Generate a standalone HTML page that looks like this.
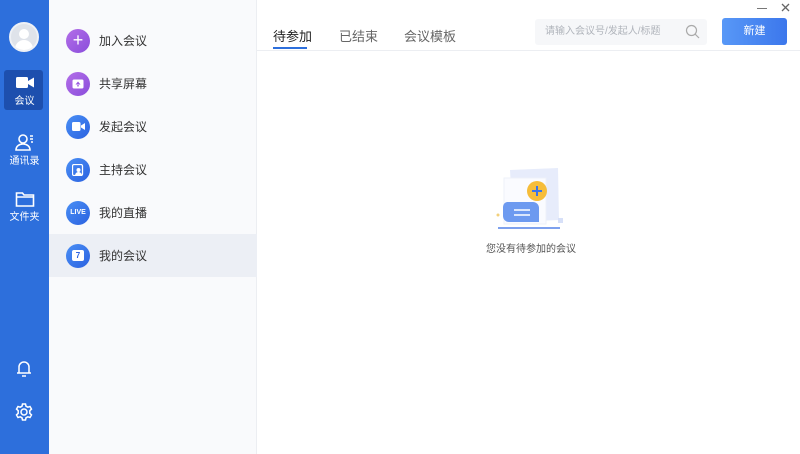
<!DOCTYPE html>
<html><head><meta charset="utf-8"><style>
*{margin:0;padding:0;box-sizing:border-box}
body{width:800px;height:454px;overflow:hidden;background:#fff;font-family:"Liberation Sans","Noto Sans CJK SC",sans-serif;position:relative}
.side{position:absolute;left:0;top:0;width:49px;height:454px;background:#2d6fdc}
.mid{position:absolute;left:49px;top:0;width:208px;height:454px;background:#f9fafc;border-right:1px solid #eceef2}
.item{position:absolute;left:0;width:208px;height:43px;display:flex;align-items:center}
.item .ic{width:24px;height:24px;border-radius:50%;margin-left:17px;margin-right:9px;display:flex;align-items:center;justify-content:center;color:#fff;font-size:8px;font-weight:bold}
.item span{font-size:12px;color:#333}
.pur{background:linear-gradient(135deg,#b36ee8,#8a4ddb)}
.blu{background:linear-gradient(135deg,#4a8ff5,#2b62e0)}
.nav{position:absolute;left:0;width:49px;text-align:center;color:#fff;font-size:10px;line-height:12px}
.tab{position:absolute;top:26px;font-size:13px;color:#666}
</style></head><body>
<div class="side">
 <div style="position:absolute;left:9px;top:22px;width:30px;height:30px;border-radius:50%;background:#dfe3ea;border:2px solid #eef1f6;overflow:hidden">
  <div style="position:absolute;left:8px;top:5px;width:10px;height:10px;border-radius:50%;background:#fff"></div>
  <div style="position:absolute;left:4px;top:16px;width:18px;height:14px;border-radius:9px 9px 0 0;background:#fff"></div>
 </div>
 <div style="position:absolute;left:4px;top:70px;width:39px;height:40px;background:#1d4fae;border-radius:3px"></div>
 <div class="nav" style="top:76px"><svg width="20" height="13" viewBox="0 0 20 13"><rect x="1" y="1" width="12" height="11" rx="1.5" fill="#fff"/><path d="M13 5l6-3.5v10L13 8z" fill="#fff"/></svg><div style="margin-top:3px">会议</div></div>
 <div class="nav" style="top:133px"><svg width="20" height="19" viewBox="0 0 20 19" fill="none" stroke="#fff" stroke-width="1.6"><circle cx="8" cy="6" r="4"/><path d="M1 17c0-4 3.5-6 7-6s7 2 7 6z"/><path d="M15 3h3M15 6h3M16 9h2"/></svg><div>通讯录</div></div>
 <div class="nav" style="top:191px"><svg width="20" height="17" viewBox="0 0 20 17" fill="none" stroke="#fff" stroke-width="1.6"><path d="M1.5 2h6l1.5 2h9.5v11h-17z"/><path d="M1.5 6h17"/></svg><div>文件夹</div></div>
 <svg style="position:absolute;left:15px;top:359px" width="18" height="19" viewBox="0 0 18 19" fill="none" stroke="#fff" stroke-width="1.5"><path d="M4 14V8a5 5 0 0110 0v6h2H2z"/><path d="M7 17h4"/></svg>
 <svg style="position:absolute;left:14px;top:402px" width="20" height="20" viewBox="0 0 20 20" fill="none" stroke="#fff" stroke-width="1.5"><circle cx="10" cy="10" r="3"/><path d="M8.5 2h3l.5 2.2 1.8 1 2.2-.7 1.5 2.6-1.7 1.6v2.6l1.7 1.6-1.5 2.6-2.2-.7-1.8 1-.5 2.2h-3l-.5-2.2-1.8-1-2.2.7-1.5-2.6 1.7-1.6V8.7L2.5 7.1 4 4.5l2.2.7 1.8-1z"/></svg>
</div>
<div class="mid">
 <div class="item" style="top:19px"><div class="ic pur" style="font-size:18px;font-weight:normal">+</div><span>加入会议</span></div>
 <div class="item" style="top:62px"><div class="ic pur"><svg width="12" height="10"><rect x="0.5" y="0.5" width="11" height="9" rx="1.5" fill="#fff"/><path d="M6 2.5l-2.5 3h5z M5.3 5h1.4v2.5H5.3z" fill="#9a58e0"/></svg></div><span>共享屏幕</span></div>
 <div class="item" style="top:105px"><div class="ic blu"><svg width="13" height="9"><rect x="0" y="0" width="8.5" height="9" rx="1.5" fill="#fff"/><path d="M9 3.5l4-2.5v7l-4-2.5z" fill="#fff"/></svg></div><span>发起会议</span></div>
 <div class="item" style="top:148px"><div class="ic blu"><svg width="12" height="12"><rect x="0.5" y="0.5" width="10" height="11" rx="1.5" fill="none" stroke="#fff" stroke-width="1.3"/><circle cx="6.5" cy="6" r="2" fill="#fff"/><path d="M3 12c0-3 2-4 3.5-4s3.5 1 3.5 4z" fill="#fff"/></svg></div><span>主持会议</span></div>
 <div class="item" style="top:191px"><div class="ic blu" style="font-size:7px">LIVE</div><span>我的直播</span></div>
 <div class="item" style="top:234px;background:#eceff5"><div class="ic blu"><div style="width:12px;height:11px;background:#fff;border-radius:2px;color:#2b62e0;font-size:8px;text-align:center;line-height:11px">7</div></div><span>我的会议</span></div>
</div>
<div class="tab" style="left:273px;color:#222">待参加</div>
<div style="position:absolute;left:273px;top:47px;width:34px;height:2px;background:#2d6fdc"></div>
<div class="tab" style="left:339px">已结束</div>
<div class="tab" style="left:404px">会议模板</div>
<div style="position:absolute;left:257px;top:50px;width:543px;height:1px;background:#eceef2"></div>
<div style="position:absolute;left:535px;top:19px;width:172px;height:26px;background:#f6f7f9;border-radius:3px;font-size:10px;color:#b0b4bb;line-height:26px;padding-left:10px">请输入会议号/发起人/标题</div>
<svg style="position:absolute;left:685px;top:24px" width="15" height="15" fill="none" stroke="#aaa" stroke-width="1.2"><circle cx="6.5" cy="6.5" r="5"/><path d="M10 10l4 4"/></svg>
<div style="position:absolute;left:722px;top:18px;width:65px;height:27px;background:linear-gradient(90deg,#5898f7,#3c77ec);border-radius:3px;color:#fff;font-size:11px;text-align:center;line-height:27px">新建</div>
<div style="position:absolute;left:757px;top:8px;width:10px;height:1px;background:#777"></div>
<svg style="position:absolute;left:781px;top:3px" width="9" height="9" stroke="#666" stroke-width="1.3"><path d="M1 1l7 7M8 1l-7 7"/></svg>
<svg style="position:absolute;left:492px;top:165px" width="75" height="70" viewBox="0 0 75 70">
 <path d="M18 5l48-2 1 52-46 2z" fill="#e7ecfb"/>
 <rect x="12" y="13" width="42" height="46" fill="#fafbff" stroke="#eef1f8"/>
 <rect x="66" y="53" width="5" height="5" fill="#d7e0f8"/>
 <circle cx="45" cy="26" r="10" fill="#f6bd3a"/>
 <path d="M45 21v10M40 26h10" stroke="#3b73e8" stroke-width="2"/>
 <path d="M15 37h26a6 6 0 016 6v14H17a6 6 0 01-6-6v-9a5 5 0 014-5z" fill="#6d9af0"/>
 <path d="M22 45h16M22 50h16" stroke="#fff" stroke-width="1.5"/>
 <circle cx="6" cy="50" r="1.5" fill="#f3d07a"/>
 <rect x="6" y="62" width="62" height="2" fill="#7ea1ee"/>
</svg>
<div style="position:absolute;left:486px;top:240px;font-size:10px;color:#555">您没有待参加的会议</div>
</body></html>
